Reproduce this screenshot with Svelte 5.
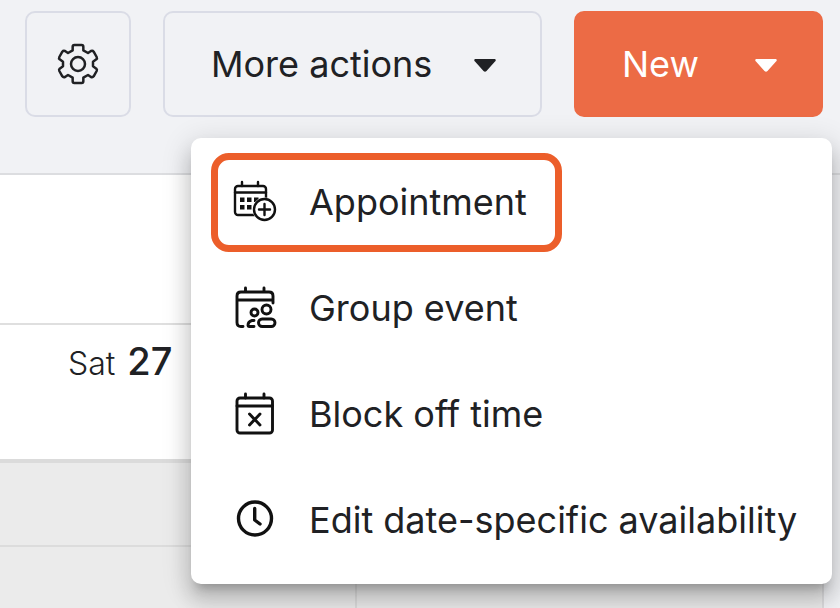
<script>
  const items = [
    { id: 'appointment', label: 'Appointment', marked: true },
    { id: 'group', label: 'Group event' },
    { id: 'block', label: 'Block off time' },
    { id: 'availability', label: 'Edit date-specific availability' }
  ];
  let open = $state(true);
</script>

<div class="page">
  <header class="toolbar">
    <button class="btn settings" aria-label="Settings">
      <svg width="42" height="42" viewBox="37 37 126 126" fill="none" stroke="#202124" stroke-width="7.5" stroke-linejoin="round">
        <path d="M89 43H111Q116 43 116 48V59L130 67L139 61Q144 59 147 63L156 79Q158 83 155 86L145 93V107L155 114Q158 117 156 121L147 137Q144 141 139 139L130 133L116 141V152Q116 157 111 157H89Q84 157 84 152V141L70 133L61 139Q56 141 53 137L44 121Q42 117 45 114L55 107V93L45 86Q42 83 44 79L53 63Q56 59 61 61L70 67L84 59V48Q84 43 89 43Z" />
        <circle cx="100" cy="100" r="21" />
      </svg>
    </button>
    <button class="btn more">
      <span>More actions</span>
      <svg class="caret" width="22" height="18" viewBox="0 -4 22 18"><path d="M1 0H21Q22.500 1 21 2.500L12.500 12Q11 13.500 9.500 12L1 2.500Q-.5 1 1 0Z" /></svg>
    </button>
    <div class="create">
      <button class="btn new" aria-haspopup="menu" aria-expanded={open} onclick={() => (open = !open)}>
        <span>New</span>
        <svg class="caret" width="22" height="18" viewBox="0 -4 22 18"><path d="M1 0H21Q22.500 1 21 2.500L12.500 12Q11 13.500 9.500 12L1 2.500Q-.5 1 1 0Z" /></svg>
      </button>
      {#if open}
        <div class="menu" role="menu">
          {#each items as item (item.id)}
            <button class="item" class:marked={item.marked} role="menuitem">
              <svg class="icon" viewBox="0 0 44 44" width="44" height="44" aria-hidden="true">
                {#if item.id === 'appointment'}
                  <rect x="2" y="6" width="31" height="29" rx="3" />
                  <path d="M2 12.500H33M9 2V6M25 2V6" />
                  <path class="solid" d="M7 17.500h4.500v4.500h-4.500zM14 17.500h4.500v4.500h-4.500zM21 17.500h4.500v4.500h-4.500zM7 25h4.500v4.500h-4.500zM14 25h4.500v4.500h-4.500z" />
                  <circle class="paper" cx="31.500" cy="29.500" r="12" />
                  <circle cx="31.500" cy="29.500" r="10.500" />
                  <path d="M31.500 24V35M26 29.500H37" />
                {:else if item.id === 'group'}
                  <g class="bold">
                    <path d="M10 40.500H8Q4 40.500 4 36.500V10Q4 6 8 6H36Q40 6 40 10V17M4 14H40M12.500 2V6M31 2V6" />
                    <circle cx="21.500" cy="26.500" r="3.500" />
                    <circle cx="33.500" cy="23.500" r="4.500" />
                    <rect x="25.500" y="33" width="16.500" height="7.500" rx="3.700" />
                    <path d="M21 34.500H19Q15 35.500 15 39.500Q15 40.500 16 40.500H21" />
                  </g>
                {:else if item.id === 'block'}
                  <g class="bold">
                    <rect x="4" y="6" width="35.500" height="35" rx="3" />
                    <path d="M4 14H39.500M12.500 2V6M31 2V6M16.500 22L27 33M27 22L16.500 33" />
                  </g>
                {:else}
                  <g class="clock">
                    <circle cx="22" cy="20.500" r="16.500" />
                    <path d="M21.700 10.500V22L27 26" />
                  </g>
                {/if}
              </svg>
              <span>{item.label}</span>
            </button>
          {/each}
        </div>
      {/if}
    </div>
  </header>

  <main class="calendar">
    <div class="allday"></div>
    <div class="day"><span>Sat</span> <strong>27</strong></div>
    <div class="slot first"></div>
    <div class="slots"><div class="slot"></div><div class="slot"></div></div>
  </main>
</div>

<style>
  :global(body) {
    background: #f1f2f5;
  }
  .page {
    height: 100vh;
    display: flex;
    flex-direction: column;
    overflow: hidden;
    box-sizing: border-box;
    font-family: Inter, 'Open Sans', sans-serif;
    color: #202124;
  }
  .page *,
  .page *::after {
    box-sizing: border-box;
  }
  .toolbar {
    display: flex;
    justify-content: flex-end;
    gap: 32px;
    padding: 11px 17px 56px 25px;
    border-bottom: 2px solid #dcdde0;
  }
  button {
    font: inherit;
    color: inherit;
    cursor: pointer;
  }
  .btn {
    height: 106px;
    display: flex;
    align-items: center;
    justify-content: space-between;
    padding: 0 44px 0 46px;
    font-size: 36px;
    font-weight: 400;
    line-height: 44px;
    border: 2px solid #dadce6;
    border-radius: 10px;
    background: transparent;
    white-space: nowrap;
  }
  .settings {
    flex: none;
    width: 106px;
    padding: 0;
    justify-content: center;
  }
  .more {
    flex: 1;
    max-width: 379px;
  }
  .create {
    position: relative;
    flex: none;
  }
  .new {
    width: 249px;
    border-color: #ec6b45;
    background: #ec6b45;
    color: #fff;
  }
  .caret {
    fill: currentColor;
  }
  .menu {
    position: absolute;
    z-index: 2;
    top: 127px;
    right: -9px;
    width: 641px;
    padding: 11px 0;
    border-radius: 10px;
    background: #fff;
    box-shadow:
      0 10px 10px -6px rgba(0, 0, 0, 0.2),
      0 16px 20px 2px rgba(0, 0, 0, 0.14),
      0 6px 28px 4px rgba(0, 0, 0, 0.12);
  }
  .item {
    position: relative;
    display: flex;
    align-items: center;
    gap: 32px;
    width: 100%;
    height: 106px;
    padding: 0 42px;
    border: 0;
    background: none;
    font-size: 36px;
    font-weight: 400;
    line-height: 44px;
    text-align: left;
    white-space: nowrap;
  }
  .marked::after {
    content: '';
    position: absolute;
    top: 4px;
    left: 20px;
    width: 351px;
    height: 99px;
    border: 7px solid #ec5e2a;
    border-radius: 18px;
  }
  .icon {
    flex: none;
    fill: none;
    stroke: #111;
    stroke-width: 2.4;
    stroke-linecap: round;
    stroke-linejoin: round;
  }
  .bold {
    stroke-width: 2.9;
  }
  .clock {
    stroke-width: 3.4;
  }
  .solid {
    fill: #111;
    stroke: none;
  }
  .paper {
    fill: #fff;
    stroke: none;
  }
  .calendar {
    flex: 1;
    display: flex;
    flex-direction: column;
    margin-right: 16px;
    border-right: 2px solid #dcdcde;
    background: #fff;
  }
  .allday {
    height: 150px;
    border-bottom: 2px solid #dfdfdf;
  }
  .day {
    display: flex;
    align-items: baseline;
    gap: 12px;
    height: 138px;
    padding: 12px 68px;
    border-bottom: 4px solid #dbdbdb;
    font-size: 32px;
    font-weight: 300;
    line-height: 48px;
  }
  .day strong {
    font-size: 38px;
    font-weight: 500;
  }
  .slot {
    background: #ebebeb;
  }
  .first {
    height: 84px;
    border-bottom: 2px solid #dcdcdc;
  }
  .slots {
    flex: 1;
    display: grid;
    grid-template-columns: 357px 1fr;
  }
  .slots .slot:first-child {
    border-right: 2px solid #dcdcdc;
  }
</style>
